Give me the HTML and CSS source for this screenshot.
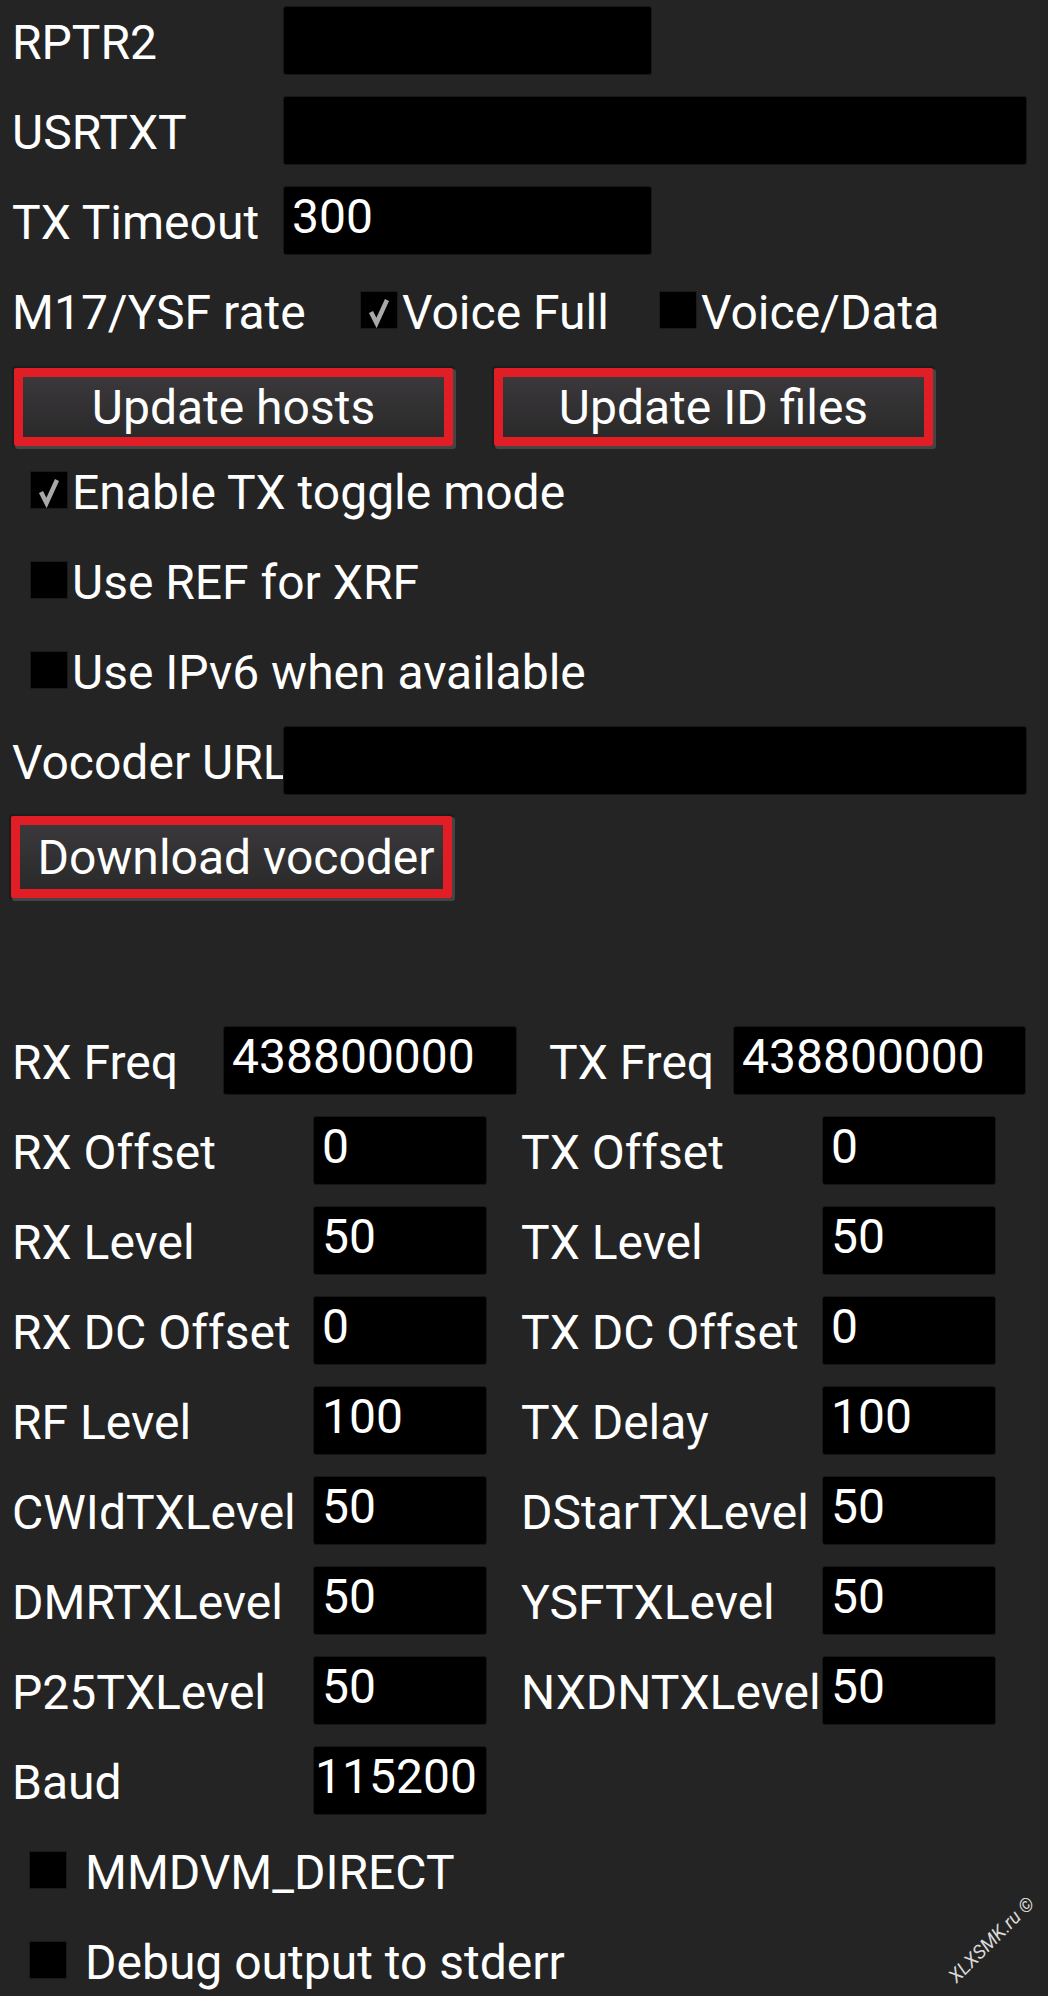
FILE: index.html
```html
<!DOCTYPE html>
<html lang="en">
<head>
<meta charset="utf-8">
<title>Settings</title>
<link rel="stylesheet" href="styles.css">
</head>
<body>
<div class="form">
  <div class="row"><span class="lbl">RPTR2</span><input class="inp w-short" value=""></div>
  <div class="row"><span class="lbl">USRTXT</span><input class="inp w-long" value=""></div>
  <div class="row"><span class="lbl">TX Timeout</span><input class="inp w-short" value="300"></div>
  <div class="row">
    <span class="lbl lbl-rate">M17/YSF rate</span>
    <div class="opt opt-first"><span class="cb"><svg class="tick" viewBox="0 0 36 36"><path d="M10 20 L15.5 31 L26 8"/></svg></span><span class="opt-text">Voice Full</span></div>
    <div class="opt"><span class="cb"></span><span class="opt-text">Voice/Data</span></div>
  </div>
  <div class="btn-row">
    <button class="btn">Update hosts</button>
    <button class="btn">Update ID files</button>
  </div>
  <div class="row cb-row"><span class="cb"><svg class="tick" viewBox="0 0 36 36"><path d="M10 20 L15.5 31 L26 8"/></svg></span><span class="opt-text">Enable TX toggle mode</span></div>
  <div class="row cb-row"><span class="cb"></span><span class="opt-text">Use REF for XRF</span></div>
  <div class="row cb-row"><span class="cb"></span><span class="opt-text">Use IPv6 when available</span></div>
  <div class="row"><span class="lbl">Vocoder URL</span><input class="inp w-long" value=""></div>
  <div class="dl-row"><button class="btn btn-dl">Download vocoder</button></div>

  <div class="row frow">
    <span class="lbl">RX Freq</span><input class="inp w-freq" value="438800000">
    <span class="lbl lbl2">TX Freq</span><input class="inp w-freq2" value="438800000">
  </div>
  <div class="row orow">
    <span class="lbl">RX Offset</span><input class="inp w-num" value="0">
    <span class="lbl lbl2">TX Offset</span><input class="inp w-num" value="0">
  </div>
  <div class="row orow">
    <span class="lbl">RX Level</span><input class="inp w-num" value="50">
    <span class="lbl lbl2">TX Level</span><input class="inp w-num" value="50">
  </div>
  <div class="row orow">
    <span class="lbl">RX DC Offset</span><input class="inp w-num" value="0">
    <span class="lbl lbl2">TX DC Offset</span><input class="inp w-num" value="0">
  </div>
  <div class="row orow">
    <span class="lbl">RF Level</span><input class="inp w-num" value="100">
    <span class="lbl lbl2">TX Delay</span><input class="inp w-num" value="100">
  </div>
  <div class="row orow">
    <span class="lbl">CWIdTXLevel</span><input class="inp w-num" value="50">
    <span class="lbl lbl2">DStarTXLevel</span><input class="inp w-num" value="50">
  </div>
  <div class="row orow">
    <span class="lbl">DMRTXLevel</span><input class="inp w-num" value="50">
    <span class="lbl lbl2">YSFTXLevel</span><input class="inp w-num" value="50">
  </div>
  <div class="row orow">
    <span class="lbl">P25TXLevel</span><input class="inp w-num" value="50">
    <span class="lbl lbl2">NXDNTXLevel</span><input class="inp w-num" value="50">
  </div>
  <div class="row orow">
    <span class="lbl">Baud</span><input class="inp w-num inp-tight" value="115200">
  </div>
  <div class="row cb-row2"><span class="cb"></span><span class="opt-text">MMDVM_DIRECT</span></div>
  <div class="row cb-row2 last"><span class="cb"></span><span class="opt-text">Debug output to stderr</span></div>
</div>
<span class="wm">XLXSMK.ru ©</span>
</body>
</html>
```

FILE: styles.css
```css
html, body {
  margin: 0;
  overflow: hidden;
}

body {
  position: relative;
  box-sizing: border-box;
  height: 1996px;
  padding: 6px 0 0 12px;
  background: #242424;
  color: #ffffff;
  font-family: Roboto, "Noto Sans", sans-serif;
  font-size: 48px;
}

.row {
  display: flex;
  align-items: flex-start;
  height: 69px;
  margin-bottom: 21px;
}

.row.last {
  margin-bottom: 0;
}

.lbl {
  flex: none;
  width: 271px;
  padding-top: 9px;
  line-height: 55px;
  white-space: nowrap;
}

.inp {
  flex: none;
  box-sizing: border-box;
  height: 69px;
  margin: 0;
  padding: 2px 8px 10px;
  background: #000000;
  color: #ffffff;
  border: 1px solid #171717;
  border-radius: 3px;
  font: inherit;
  line-height: 55px;
  outline: none;
}

.inp-tight {
  padding-left: 1px;
  padding-right: 0;
}

.w-short { width: 369px; }
.w-long { width: 744px; }
.w-freq { width: 294px; }
.w-freq2 { width: 293px; }
.w-num { width: 174px; }

.lbl-rate { width: 349px; }

.opt {
  display: flex;
  align-items: flex-start;
}

.opt-first { width: 299px; }

.cb {
  flex: none;
  display: block;
  width: 36px;
  height: 36px;
  margin-top: 16px;
  background: #000000;
  box-shadow: 0 0 0 1px #1b1b1b;
}

.tick {
  display: block;
  width: 36px;
  height: 36px;
}

.tick path {
  fill: none;
  stroke: #a9a9a9;
  stroke-width: 4.5;
  stroke-linecap: butt;
  stroke-linejoin: miter;
}

.opt-text {
  margin-left: 5px;
  padding-top: 9px;
  line-height: 55px;
  white-space: nowrap;
}

.btn-row {
  display: flex;
  height: 84px;
  margin-bottom: 6px;
  padding-left: 2px;
}

.btn {
  flex: none;
  box-sizing: border-box;
  width: 439px;
  height: 78px;
  margin: 2px 0 0;
  padding: 0;
  border: 9px solid #e11d26;
  border-radius: 2px;
  background: linear-gradient(#3a383a, #2b2a2b);
  color: #ffffff;
  font: inherit;
  line-height: 55px;
  white-space: nowrap;
  box-shadow: 2px 2px 0 1px #454545, 0 0 0 2px #1c1c1c;
}

.btn + .btn {
  margin-left: 41px;
}

.cb-row {
  padding-left: 19px;
}

.dl-row {
  display: flex;
  height: 84px;
  margin-bottom: 126px;
}

.btn-dl {
  width: 441px;
  height: 82px;
  margin: 0 0 0 -1px;
  padding-left: 9px;
}

.frow .lbl { width: 211px; }
.frow .lbl2 { margin-left: 32px; width: 184px; }

.orow .lbl { width: 301px; }
.orow .lbl2 { margin-left: 34px; width: 301px; }

.cb-row2 {
  padding-left: 18px;
}

.cb-row2 .opt-text {
  margin-left: 19px;
}

.wm {
  position: absolute;
  left: 925px;
  top: 1929px;
  width: 134px;
  text-align: center;
  font-size: 19px;
  font-style: italic;
  line-height: 22px;
  color: #d8d8d8;
  white-space: nowrap;
  transform: rotate(-45deg);
}
```
